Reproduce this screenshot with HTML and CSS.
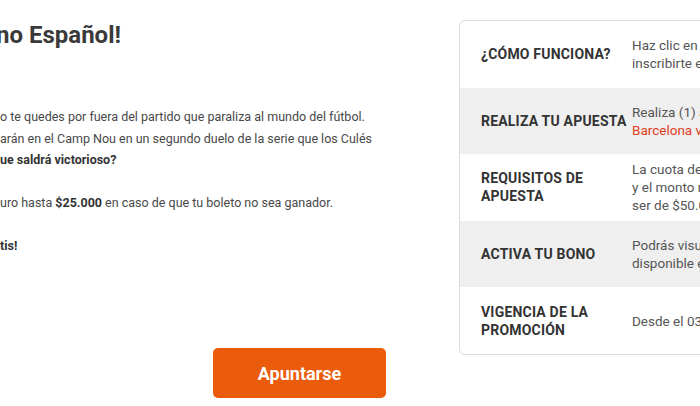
FILE: index.html
```html
<!DOCTYPE html>
<html lang="es">
<head>
<meta charset="utf-8">
<link rel="stylesheet" href="styles.css">
</head>
<body>
<div class="page">
  <section class="intro">
    <h1 class="title">no Español!</h1>
    <p class="text">o te quedes por fuera del partido que paraliza al mundo del fútbol.<br>arán en el Camp Nou en un segundo duelo de la serie que los Culés<br><strong>ue saldrá victorioso?</strong></p>
    <p class="text">uro hasta <strong>$25.000</strong> en caso de que tu boleto no sea ganador.</p>
    <p class="text"><strong>tis!</strong></p>
    <div class="actions">
      <button class="btn">Apuntarse</button>
    </div>
  </section>
  <section class="card">
    <div class="row">
      <div class="label">¿Cómo funciona?</div>
      <div class="value">Haz clic en el botón “Apuntarse” para<br>inscribirte en la promoción.</div>
    </div>
    <div class="row alt">
      <div class="label">Realiza tu apuesta</div>
      <div class="value">Realiza (1) apuesta simple o combinada al partido<br><span class="hl">Barcelona vs Espanyol</span></div>
    </div>
    <div class="row">
      <div class="label">Requisitos de<br>apuesta</div>
      <div class="value">La cuota debe ser mínima de 1.50<br>y el monto mínimo de apuesta debe<br>ser de $50.000.</div>
    </div>
    <div class="row alt">
      <div class="label">Activa tu bono</div>
      <div class="value">Podrás visualizar tu bono<br>disponible en tu cuenta.</div>
    </div>
    <div class="row">
      <div class="label">Vigencia de la<br>promoción</div>
      <div class="value">Desde el 03 de abril hasta el 10 de abril.</div>
    </div>
  </section>
</div>
</body>
</html>
```

FILE: styles.css
```css
html, body {
  margin: 0;
  padding: 0;
  background: #fff;
  overflow: hidden;
}
body {
  font-family: Roboto, "Liberation Sans", Arial, sans-serif;
  color: #444;
  width: 700px;
  height: 406px;
}
.page {
  display: flex;
  gap: 19px;
  padding-top: 20px;
  width: 1200px;
}
.intro {
  width: 440px;
  flex: none;
}
.title {
  margin: 1px 0 0 -4px;
  font-size: 24px;
  line-height: 29px;
  font-weight: 700;
  color: #3a3a3a;
}
.text {
  margin: 0 0 21.5px;
  font-size: 12.5px;
  line-height: 21.5px;
  color: #484848;
  white-space: nowrap;
}
.text strong {
  color: #333;
}
.intro .text:first-of-type {
  margin-top: 56px;
}
.actions {
  padding-top: 70px;
  padding-left: 213px;
}
.btn {
  width: 173px;
  height: 50px;
  border: none;
  border-radius: 5px;
  background: #ea5b0c;
  color: #fff;
  font-family: Roboto, "Liberation Sans", Arial, sans-serif;
  font-size: 18px;
  font-weight: 700;
}
.card {
  flex: none;
  width: 600px;
  border: 1px solid #dcdcdc;
  border-radius: 6px;
  overflow: hidden;
  align-self: flex-start;
}
.row {
  display: flex;
  align-items: center;
  height: 66.6px;
}
.row.alt {
  background: #efefef;
}
.label {
  width: 151px;
  padding-left: 21px;
  flex: none;
  font-size: 14px;
  line-height: 18px;
  font-weight: 700;
  text-transform: uppercase;
  color: #333;
  letter-spacing: 0.2px;
}
.value {
  font-size: 13.5px;
  line-height: 18px;
  color: #555;
  white-space: nowrap;
}
.hl {
  color: #e0401e;
}
```
